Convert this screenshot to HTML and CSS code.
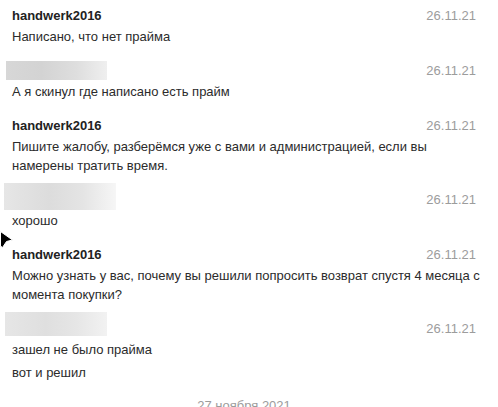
FILE: index.html
```html
<!DOCTYPE html>
<html lang="ru">
<head>
<meta charset="utf-8">
<link rel="stylesheet" href="styles.css">
</head>
<body>
<div class="chat">
  <div class="msg">
    <div class="msg__head"><span class="msg__name">handwerk2016</span><span class="msg__date">26.11.21</span></div>
    <p class="msg__text">Написано, что нет прайма</p>
  </div>
  <div class="msg">
    <div class="msg__head"><span class="redact redact--a"></span><span class="msg__date">26.11.21</span></div>
    <p class="msg__text">А я скинул где написано есть прайм</p>
  </div>
  <div class="msg">
    <div class="msg__head"><span class="msg__name">handwerk2016</span><span class="msg__date">26.11.21</span></div>
    <p class="msg__text">Пишите жалобу, разберёмся уже с вами и администрацией, если вы намерены тратить время.</p>
  </div>
  <div class="msg">
    <div class="msg__head"><span class="redact redact--b"></span><span class="msg__date">26.11.21</span></div>
    <p class="msg__text">хорошо</p>
  </div>
  <div class="msg">
    <div class="msg__head"><span class="msg__name">handwerk2016</span><span class="msg__date">26.11.21</span></div>
    <p class="msg__text">Можно узнать у вас, почему вы решили попросить возврат спустя 4 месяца с момента покупки?</p>
  </div>
  <div class="msg">
    <div class="msg__head"><span class="redact redact--c"></span><span class="msg__date">26.11.21</span></div>
    <p class="msg__text">зашел не было прайма</p>
    <p class="msg__text">вот и решил</p>
  </div>
  <div class="day">27 ноября 2021</div>
</div>
<svg class="cursor" width="14" height="18" viewBox="0 0 14 18"><polygon points="0.5,0.5 12.5,9 6.5,10.5 2.5,16.5 0.5,15" fill="#000" stroke="#fff" stroke-width="1"/></svg>
</body>
</html>
```
FILE: styles.css
```css
html, body {
  margin: 0;
  background: #fff;
}
body {
  font-family: "Liberation Sans", Arial, sans-serif;
  font-size: 13px;
  color: #2b2b2b;
  position: relative;
  height: 407px;
  overflow: hidden;
}
.chat {
  padding: 7px 22px 0 12px;
  display: flex;
  flex-direction: column;
  gap: 16px;
}
.msg {
  display: flex;
  flex-direction: column;
  gap: 4px;
}
.msg__head {
  position: relative;
  display: flex;
  justify-content: space-between;
  align-items: baseline;
  line-height: 18px;
  height: 18px;
  margin-bottom: -2px;
}
.msg__name {
  font-weight: bold;
  color: #222;
}
.msg__date {
  margin-left: auto;
  color: #9c9c9c;
}
.msg__text {
  margin: 0 -8px 0 0;
  line-height: 19px;
}
.redact {
  position: absolute;
}
.redact--a {
  left: -6px;
  top: -1px;
  width: 101px;
  height: 19px;
  background: linear-gradient(90deg, #d7d7d7 0%, #d3d3d3 35%, #dedede 70%, #efefef 100%);
}
.redact--b {
  left: -8px;
  top: -8px;
  width: 112px;
  height: 27px;
  background: linear-gradient(90deg, #e6e6e6 0%, #dcdcdc 40%, #e4e4e4 70%, #f6f6f6 100%);
}
.redact--c {
  left: -7px;
  top: -8px;
  width: 102px;
  height: 24px;
  background: linear-gradient(90deg, #e6e6e6 0%, #dfdfdf 40%, #e6e6e6 70%, #f2f2f2 100%);
}
.day {
  margin-top: -1px;
  text-align: center;
  color: #9c9c9c;
  line-height: 18px;
}
.cursor {
  position: absolute;
  left: 0;
  top: 231px;
}
```
